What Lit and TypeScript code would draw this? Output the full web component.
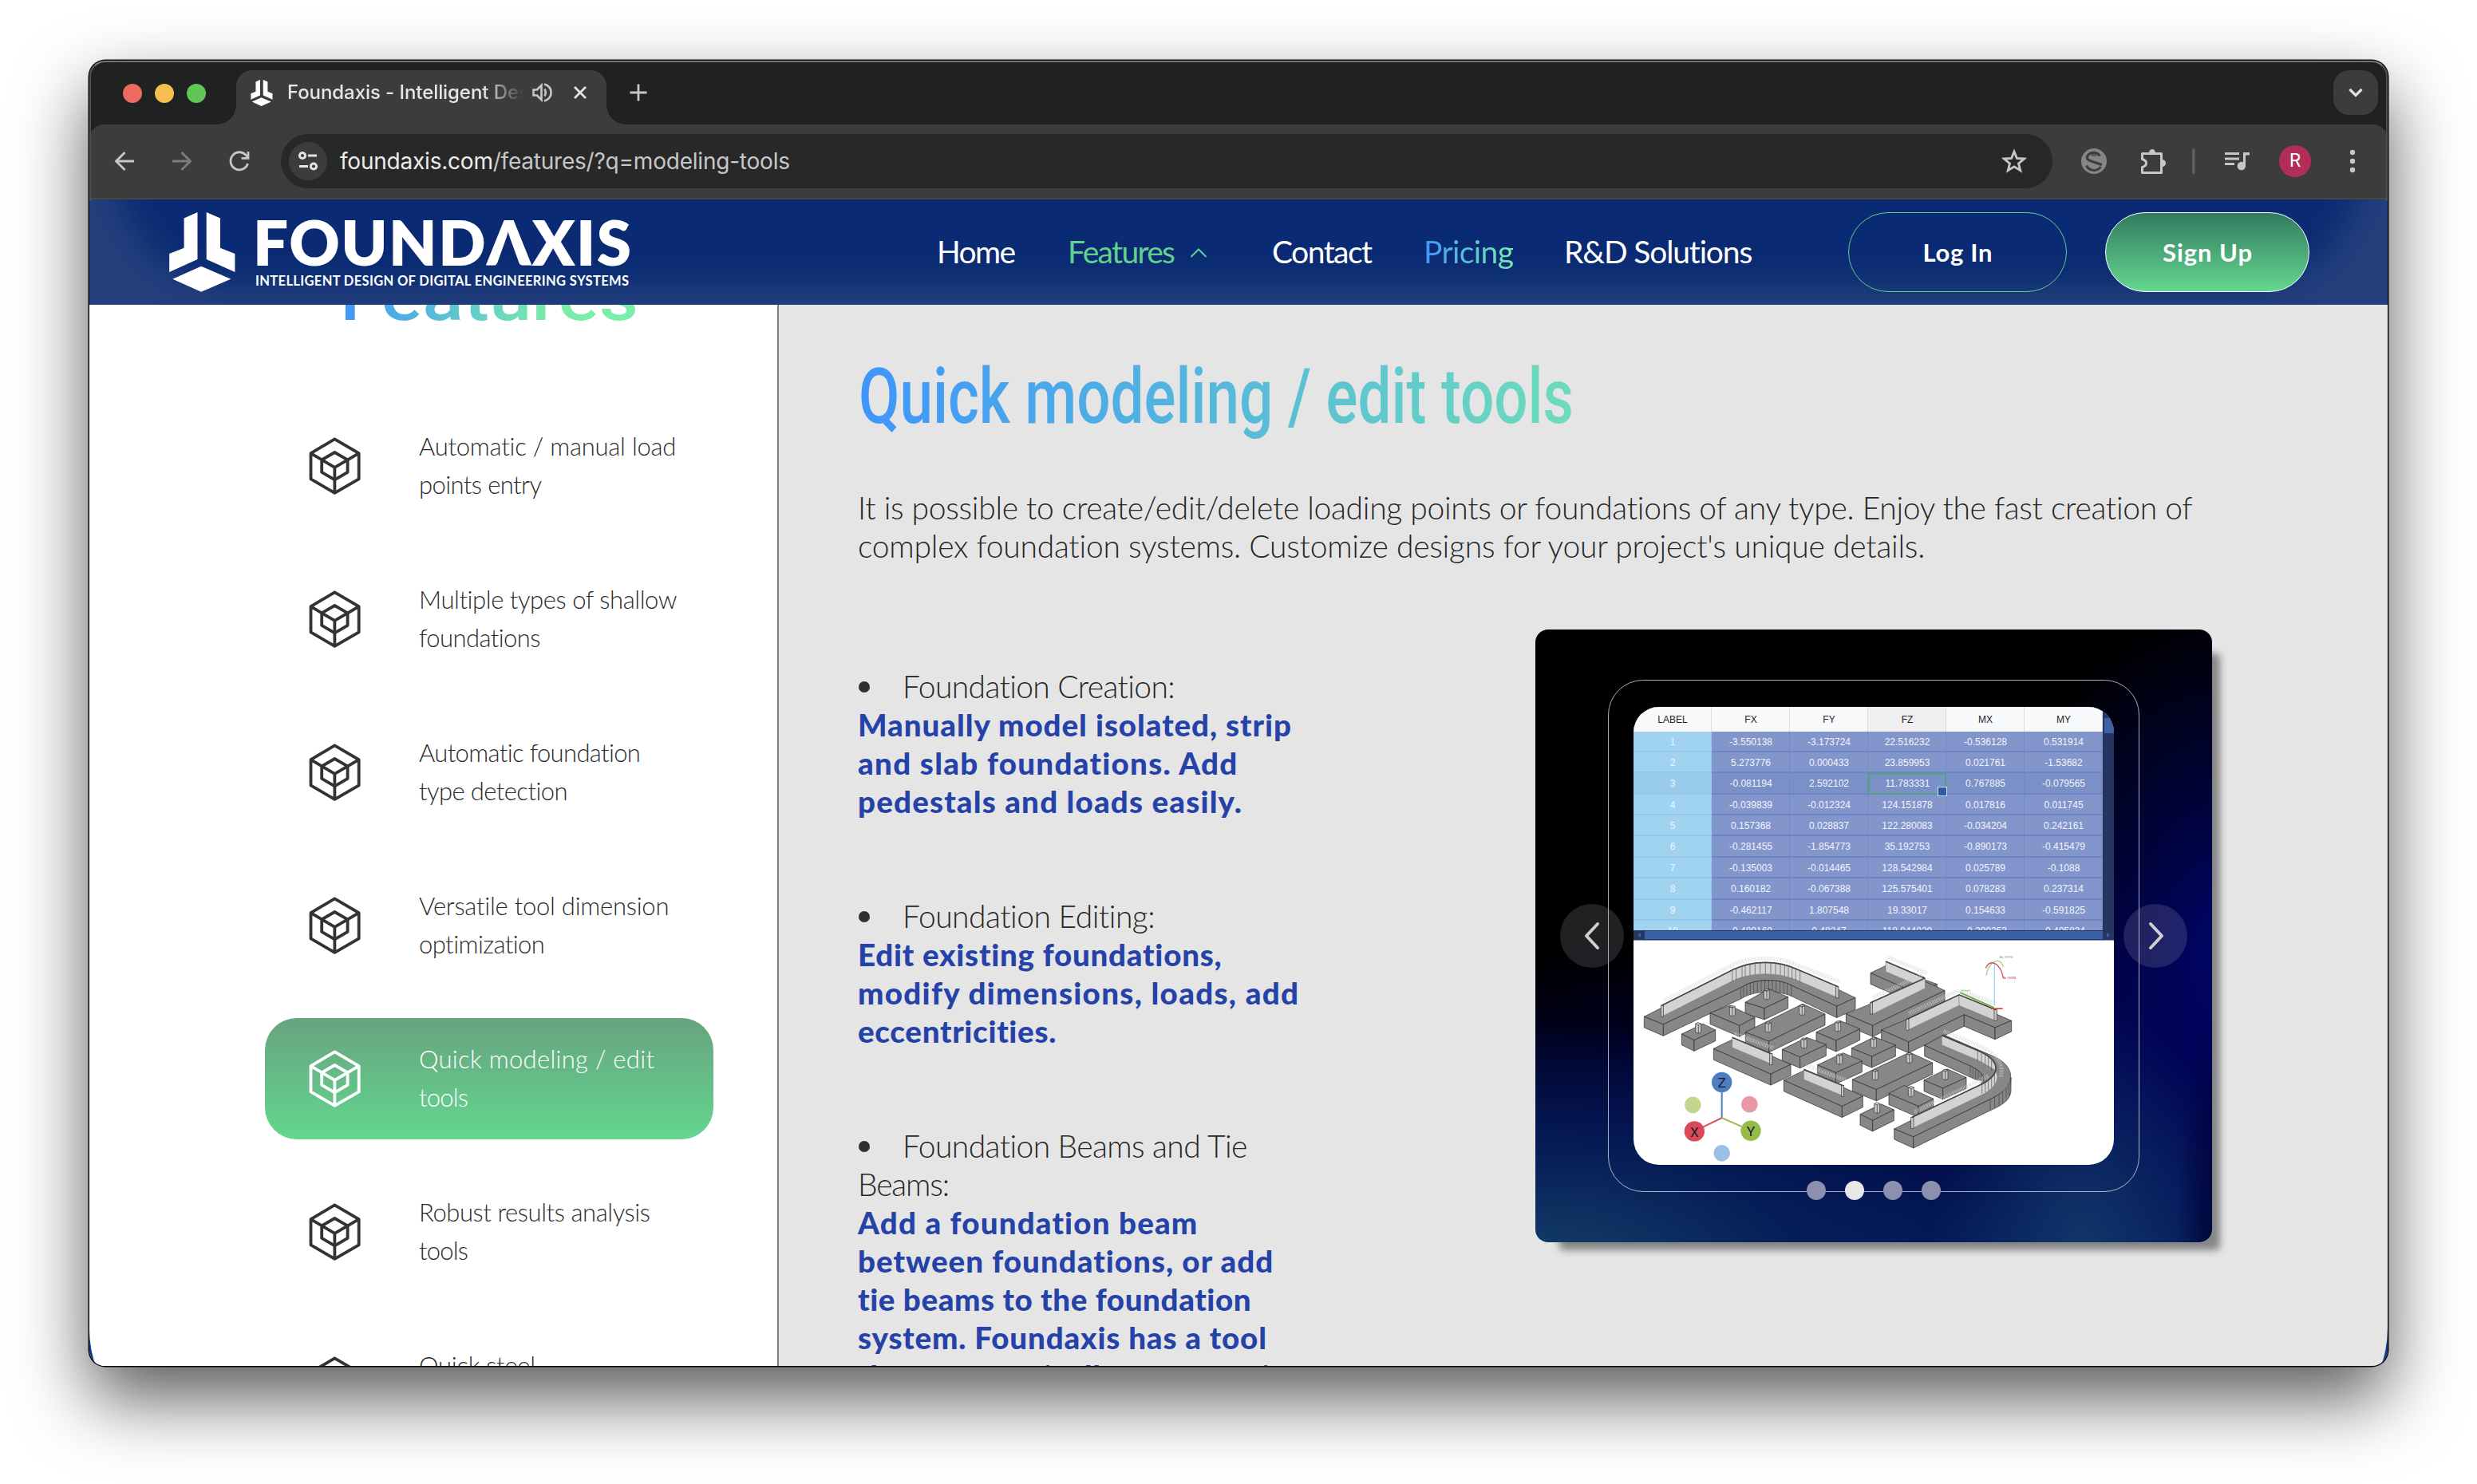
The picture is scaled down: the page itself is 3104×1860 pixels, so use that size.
import { LitElement, html, svg, css } from "lit";
import { customElement } from "lit/decorators.js";
import { classMap } from "lit/directives/class-map.js";

/** One line of text set to an exact measure; "track" spreads letters, "scale" condenses them. */
const line = (text: string, width: number, cls = "", mode = "track") =>
  html`<span class="fit ${cls}" data-w=${width} data-mode=${mode}>${text}</span>`;

const FEATURES: { lines: [string, number][]; active?: boolean }[] = [
  { lines: [["Automatic / manual load", 323], ["points entry", 154]] },
  { lines: [["Multiple types of shallow", 324], ["foundations", 153]] },
  { lines: [["Automatic foundation", 279], ["type detection", 187]] },
  { lines: [["Versatile tool dimension", 314], ["optimization", 159]] },
  { lines: [["Quick modeling / edit", 295], ["tools", 62]], active: true },
  { lines: [["Robust results analysis", 290], ["tools", 62]] },
  { lines: [["Quick steel", 146], ["design", 90]] },
];

const BULLETS: { head: [string, number][]; body: [string, number][] }[] = [
  {
    head: [["Foundation Creation:", 343]],
    body: [["Manually model isolated, strip", 543], ["and slab foundations. Add", 476], ["pedestals and loads easily.", 481]],
  },
  {
    head: [["Foundation Editing:", 318]],
    body: [["Edit existing foundations,", 457], ["modify dimensions, loads, add", 552], ["eccentricities.", 249]],
  },
  {
    head: [["Foundation Beams and Tie", 433], ["Beams:", 115]],
    body: [
      ["Add a foundation beam", 426],
      ["between foundations, or add", 521],
      ["tie beams to the foundation", 494],
      ["system. Foundaxis has a tool", 512],
      ["that automatically connects it", 532],
    ],
  },
];

const COLUMNS = ["LABEL", "FX", "FY", "FZ", "MX", "MY"];
const ROWS = [
  ["1", "-3.550138", "-3.173724", "22.516232", "-0.536128", "0.531914"],
  ["2", "5.273776", "0.000433", "23.859953", "0.021761", "-1.53682"],
  ["3", "-0.081194", "2.592102", "11.783331", "0.767885", "-0.079565"],
  ["4", "-0.039839", "-0.012324", "124.151878", "0.017816", "0.011745"],
  ["5", "0.157368", "0.028837", "122.280083", "-0.034204", "0.242161"],
  ["6", "-0.281455", "-1.854773", "35.192753", "-0.890173", "-0.415479"],
  ["7", "-0.135003", "-0.014465", "128.542984", "0.025789", "-0.1088"],
  ["8", "0.160182", "-0.067388", "125.575401", "0.078283", "0.237314"],
  ["9", "-0.462117", "1.807548", "19.33017", "0.154633", "-0.591825"],
  ["10", "-0.489169", "0.48247", "118.944029", "-0.290253", "-0.405834"],
];

type Pt = [number, number];
const pts = (p: Pt[]) => p.map((q) => q.join(",")).join(" ");
const down = (p: Pt, h: number): Pt => [p[0], p[1] + h];

/** Extruded slab: the top face is left, front, right, back. */
const slab = (l: Pt, f: Pt, r: Pt, b: Pt, h = 42) => svg`
  <polygon points=${pts([l, f, down(f, h), down(l, h)])} />
  <polygon points=${pts([f, r, down(r, h), down(f, h)])} />
  <polygon points=${pts([l, f, r, b])} />`;

const pillar = (x: number, y: number) => svg`
  <path class="pillar" d="M${x - 11},${y + 5} L${x - 2},${y} L${x + 10},${y + 4} V${y + 36} L${x},${y + 41} L${x - 11},${y + 36} Z M${x},${y + 9} V${y + 40} M${x - 11},${y + 5} L${x},${y + 9} L${x + 10},${y + 4}" />`;

const wall = (a: Pt, b: Pt, h = 40) => svg`
  <polygon class="wall" points=${pts([a, b, down(b, h), down(a, h)])} />
  <polyline class="cap" points=${pts([a, b])} />`;

const post = (x: number, y: number) =>
  svg`<rect class="pillar" x=${x - 5} y=${y} width="10" height="42" />`;

const stripes = (list: [number, number][], h = 42) =>
  list.map(([x, y]) => svg`<line class="stripe" x1=${x} y1=${y} x2=${x} y2=${y + h} />`);

/** Load ticks that run above each wall. */
const LOAD_RUNS = [
  "M140,222 L400,86 C470,56 570,56 640,88 L800,152",
  "M980,60 L1130,120",
  "M925,210 L1115,122",
  "M1060,270 L1248,182",
  "M1250,184 L1390,234",
  "M1190,336 L1325,392 C1395,424 1415,460 1405,510",
  "M1080,640 L1360,504",
  "M402,346 L550,400",
  "M672,464 L820,520",
];

const model = svg`
  <svg class="model" viewBox="24 -3 1803 841" preserveAspectRatio="none">
    <g class="solid">
      <path d="M64,282 L136,311 L430,172 C480,138 570,138 620,166 L788,243 L858,211 L650,112 C570,70 470,75 400,112 Z" />
      <path d="M136,311 L430,172 C480,138 570,138 620,166 L788,243 V286 L620,206 C570,182 480,182 430,214 L136,354 Z" />
      <polygon points="64,282 136,311 136,354 64,323" />
      <polygon points="788,243 858,211 858,254 788,286" />
      ${stripes([[428, 172], [438, 166], [450, 159], [463, 154], [476, 150], [490, 147], [504, 145], [518, 144], [532, 144], [546, 145], [560, 147], [575, 150], [589, 154], [602, 159], [617, 165]])}
      <path class="wall" d="M130,240 L400,105 C470,70 570,70 640,105 L792,170 V211 L640,146 C570,114 470,114 400,146 L130,282 Z" />
      ${stripes([[395, 108], [410, 101], [432, 93], [444, 89], [462, 85], [481, 82], [500, 80], [520, 79], [540, 79], [558, 81], [576, 84], [592, 87], [606, 91], [620, 97], [634, 103], [650, 110]])}
      <path class="cap open" d="M130,240 L400,105 C470,70 570,70 640,105 L794,170" />
      ${post(132, 240)}${post(790, 170)}

      ${slab([915, 118], [1090, 195], [1165, 160], [972, 91])}
      ${wall([972, 75], [1120, 138], 38)}
      ${slab([823, 272], [923, 315], [1194, 184], [1120, 150])}
      <polygon class="wall" points="915,230 1120,138 1120,176 923,272" />
      <polyline class="cap" points="915,230 1120,138" />
      ${post(918, 230)}

      ${slab([444, 228], [516, 250], [605, 208], [532, 178], 43)}${pillar(525, 178)}
      ${slab([312, 268], [422, 315], [480, 285], [385, 240])}${pillar(396, 240)}
      ${slab([205, 347], [252, 370], [332, 332], [285, 309], 41)}${pillar(268, 304)}
      ${slab([445, 340], [533, 374], [744, 272], [660, 234])}${pillar(658, 237)}${pillar(531, 301)}
      ${slab([711, 340], [786, 371], [875, 328], [800, 297])}${pillar(793, 298)}

      <polygon points="956,332 1058,377 1267,275 1383,323 1445,297 1248,212" />
      <polygon points="956,332 1058,377 1058,418 956,374" />
      <polygon points="1058,377 1267,275 1267,318 1058,418" />
      <polygon points="1267,275 1383,323 1383,367 1267,318" />
      <polygon points="1383,323 1445,297 1445,338 1383,367" />
      <polygon class="wall" points="1052,292 1248,200 1248,240 1052,334" />
      <polygon class="wall" points="1248,200 1385,256 1385,297 1248,240" />
      <polyline class="cap" points="1052,292 1248,200 1385,256" />
      ${post(1054, 292)}${post(1385, 256)}

      ${slab([583, 405], [650, 433], [748, 387], [675, 360])}${pillar(665, 361)}
      ${slab([844, 400], [920, 431], [1009, 389], [930, 358])}${pillar(927, 359)}
      ${slab([325, 402], [540, 497], [615, 461], [400, 366])}
      ${wall([395, 360], [543, 422], 38)}${post(541, 421)}
      ${slab([716, 463], [785, 492], [883, 448], [812, 418])}${pillar(799, 421)}
      ${slab([847, 518], [937, 555], [1148, 455], [1062, 416], 43)}${pillar(1061, 417)}${pillar(933, 480)}
      ${slab([589, 520], [808, 618], [886, 580], [667, 483])}
      ${wall([664, 480], [812, 541], 38)}${post(810, 540)}

      <path d="M1118,390 L1290,467 C1345,492 1352,520 1320,545 L1004,703 L1076,733 L1365,592 C1470,540 1460,470 1380,432 L1190,350 Z" />
      <path d="M1118,390 L1290,467 C1325,484 1342,500 1342,522 L1310,518 L1118,430 Z" />
      ${stripes([[1290, 469], [1300, 474], [1310, 480], [1320, 487], [1330, 495]], 36)}
      ${slab([1116, 520], [1187, 550], [1275, 510], [1203, 478])}${pillar(1196, 479)}
      ${slab([984, 570], [1095, 618], [1151, 590], [1042, 540])}${pillar(1068, 543)}
      <polygon points="1004,703 1076,733 1076,775 1004,742" />
      <path d="M1076,733 L1365,592 C1420,565 1443,540 1443,510 V556 C1443,590 1420,610 1365,634 L1076,775 Z" />
      ${stripes([[1365, 593], [1382, 584], [1398, 574], [1412, 563], [1425, 550], [1435, 536]])}
      <path class="wall" d="M1183,352 L1320,410 C1395,442 1412,490 1340,532 L1070,660 V702 L1335,575 C1400,540 1400,500 1380,480 L1320,446 L1183,388 Z" />
      ${stripes([[1318, 410], [1332, 417], [1346, 425], [1358, 434], [1370, 446]], 38)}
      ${stripes([[1334, 534], [1346, 528], [1358, 520], [1370, 510], [1381, 498]], 38)}
      <path class="cap open" d="M1183,352 L1320,410 C1395,442 1412,490 1340,532 L1070,660" />
      ${post(1072, 660)}
      ${slab([876, 648], [923, 671], [1003, 631], [955, 610], 41)}${pillar(940, 604)}
    </g>
    <g class="loads">${LOAD_RUNS.map((d) => svg`<path d=${d} />`)}</g>
    <g fill="none" stroke-width="4">
      <path d="M1252,192 L1380,249" stroke="#74ad3c" stroke-width="6" />
      <path d="M1381,80 V240" stroke="#9fd2f2" />
      <path d="M1350,128 C1354,84 1400,48 1414,96" stroke="#a5cc88" />
      <path d="M1348,100 C1360,66 1402,74 1414,136" stroke="#d9485a" />
      <path d="M1368,252 H1412" stroke="#e23b3b" stroke-width="5" />
      <path d="M1258,184 H1292" stroke="#9cc77e" stroke-width="5" stroke-dasharray="5 2" />
    </g>
    <text class="tiny" x="1400" y="63" fill="#8cb862">My: 1.8/718</text>
    <text class="tiny" x="1412" y="141" fill="#d9485a">Mx: 1.5/578</text>
    <g stroke-width="6">
      <path d="M356,662 V560" stroke="#4c80c4" />
      <path d="M356,662 L285,696" stroke="#d94a56" />
      <path d="M356,662 L430,694" stroke="#96bb48" />
    </g>
    <circle cx="356" cy="528" r="38" fill="#4c7dc0" /><circle cx="253" cy="712" r="38" fill="#d94a56" />
    <circle cx="465" cy="710" r="38" fill="#96bb48" /><circle cx="247" cy="613" r="31" fill="#c3d68b" />
    <circle cx="460" cy="611" r="31" fill="#e79aa6" /><circle cx="356" cy="794" r="31" fill="#9cbfe6" />
    <g class="axis">
      <text x="356" y="547">Z</text><text x="253" y="732">X</text><text x="465" y="730">Y</text>
    </g>
  </svg>`;

const mark = (cls: string) => html`<svg class=${cls} viewBox="212 266 83 100">
  <path fill="#fff" d="M247.5 266 230.6 273.5V310.7L212.2 318V341L247.5 325Z M258.7 266 276 273.5V310.7L294.4 318V341L258.7 325Z M252 333.7 289.3 349.7 252 365.8 216.3 349.7Z" />
</svg>`;

const cube = html`<svg class="cube" viewBox="386 548 65 72" fill="none" stroke="currentColor" stroke-width="3.8" stroke-linejoin="round">
  <path d="M418.4 550.3 448.7 568.2V600.4L418.4 617.8 388.5 600.4V568.2Z M388.5 568.2 418.4 585.8 448.7 568.2 M418.4 585.8V617.8 M418.4 567 434.6 576.4V591.8L418.4 601.3 402.2 591.8V576.4Z" />
</svg>`;

@customElement("app-root")
export class AppRoot extends LitElement {
  static styles = css`
    :host { display: block; width: 3104px; height: 1860px; overflow: hidden; background: #fff; }
    * { box-sizing: border-box; }
    svg { display: block; flex: none; }
    .desk { padding: 76px 112px; }
    .window {
      position: relative; width: 2880px; height: 1636px; border-radius: 20px; overflow: hidden;
      display: flex; flex-direction: column; background: #202221;
    }
    .frame {
      width: 2880px; height: 1636px; border-radius: 20px;
      box-shadow: 0 0 0 1.5px #0b0b0b, 0 40px 90px rgba(0, 0, 0, .66);
    }
    .window::after {
      content: ""; position: absolute; inset: 0; height: 174px; border-radius: 20px 20px 0 0; pointer-events: none;
      border: 2px solid #505251; border-top-color: #737574; border-bottom: 0;
    }
    .fit { display: inline-block; white-space: nowrap; transform-origin: 0 50%; }

    /* browser chrome */
    .tabs { height: 80px; flex: none; display: flex; align-items: flex-end; padding: 0 12px 0 42px; position: relative; }
    .lights { display: flex; gap: 16px; padding-bottom: 27px; width: 142px; }
    .light { width: 24px; height: 24px; border-radius: 50%; }
    .red { background: #ed6a5f; } .amber { background: #f5bf4f; } .green { background: #61c454; }
    .tab {
      position: relative; height: 68px; width: 464px; background: #3c3c3c; border-radius: 20px 20px 0 0;
      display: flex; align-items: center; padding: 0 24px 12px 16px;
    }
    .tab::before, .tab::after { content: ""; position: absolute; bottom: 0; width: 24px; height: 24px; }
    .tab::before { left: -24px; background: radial-gradient(circle at 0 0, transparent 23.5px, #3c3c3c 24px); }
    .tab::after { right: -24px; background: radial-gradient(circle at 100% 0, transparent 23.5px, #3c3c3c 24px); }
    .favicon { width: 32px; height: 33px; }
    .title {
      width: 298px; margin-left: 16px; overflow: hidden; font: 500 24px/34px Inter, sans-serif; color: #e6e6e6;
      -webkit-mask-image: linear-gradient(90deg, #000 245px, transparent 296px); mask-image: linear-gradient(90deg, #000 245px, transparent 296px);
    }
    .audio { margin-left: 9px; }
    .close { margin-left: 26px; }
    .plus { margin: 0 auto 28px 28px; }
    .drop { width: 56px; height: 56px; border-radius: 20px; background: #3c3c3c; display: grid; place-items: center; margin-bottom: 12px; }
    .bar {
      height: 94px; flex: none; background: #3c3c3c; display: flex; align-items: center; padding: 0 36px 0 31px;
      border-radius: 18px 18px 0 0; border-bottom: 2px solid #474747;
    }
    .forward { margin-left: 46px; }
    .reload { margin-left: 45px; }
    .pill { width: 2220px; height: 68px; border-radius: 34px; background: #282828; display: flex; align-items: center; padding: 0 32px 0 10px; margin-left: 38px; }
    .site { width: 48px; height: 48px; border-radius: 50%; background: #3c3c3c; display: grid; place-items: center; }
    .url { margin-left: 16px; margin-right: auto; font: 400 28px/40px Inter, sans-serif; color: #c7c7c7; }
    .url b { font-weight: 400; color: #ececec; }
    .avatar { width: 40px; height: 40px; border-radius: 50%; background: #b22d5a; color: #fff; font: 400 23px/40px Roboto, sans-serif; text-align: center; margin-left: 36px; }
    .ext { margin-left: 36px; } .puzzle { margin-left: 41px; } .sep { margin-left: 32px; }
    .media { margin-left: 37px; } .more { margin-left: 48px; }

    /* site header */
    .view { flex: 1; min-height: 0; position: relative; background: #16408a; overflow: hidden; }
    .header {
      position: relative; height: 132px; background: #233f7c; overflow: hidden; display: flex; align-items: flex-start; padding: 16px 100px;
      font-family: Lato, "Liberation Sans", sans-serif; color: #fff;
    }
    .header::before {
      content: ""; position: absolute; inset: -160px 34px 24px 34px; border-radius: 0 0 150px 150px;
      background: #0a2b73; filter: blur(19px);
    }
    .header > * { position: relative; }
    .logo { display: flex; width: 962px; flex: none; }
    .emblem { width: 83px; height: 100px; }
    .words { display: flex; flex-direction: column; margin-left: 22px; }
    .brand { font-size: 78px; font-weight: 800; line-height: 74px; height: 76px; }
    .tagline { font-size: 16.5px; font-weight: 700; line-height: 20px; padding-left: 3px; }
    .nav { display: flex; font-size: 39px; font-weight: 400; line-height: 48px; padding-top: 24.5px; width: 1142px; flex: none; }
    .nav .fit { flex: none; }
    .n2 { margin-left: 65px; color: #62d18c; }
    .up { margin: 19px 0 0 18px; }
    .n3 { margin-left: 81px; }
    .n4 { margin-left: 64px; color: transparent; background: linear-gradient(90deg, #3f95fb, #7aeea9); -webkit-background-clip: text; background-clip: text; }
    .n5 { margin-left: 63px; }
    .btn { height: 100px; border-radius: 50px; display: grid; place-items: center; font-size: 31px; font-weight: 700; line-height: 44px; flex: none; }
    .login { width: 274px; border: 1.5px solid #5fce8c; }
    .signup { width: 256px; margin-left: 48px; border: 1.5px solid #fff; background: linear-gradient(#347a60, #64d78f); }

    /* page */
    .page { height: 1430px; display: flex; border-radius: 0 0 148px 148px; overflow: hidden; background: #e5e5e5; font-family: Lato, "Liberation Sans", sans-serif; font-weight: 300; color: #2b2b2b; }
    .side { width: 864px; flex: none; background: #fff; border-right: 2px solid #808080; padding-left: 220px; }
    .side-title {
      display: block; height: 116px; margin: -68px 0 0 94px; font: 500 86px/116px Roboto, sans-serif; color: transparent;
      background: linear-gradient(90deg, #3f95fb, #7aeea9 240px); -webkit-background-clip: text; background-clip: text;
    }
    .side-head { height: 126px; overflow: visible; display: flex; align-items: flex-start; }
    .item { width: 562px; height: 152px; border-radius: 40px; margin-bottom: 40px; display: flex; align-items: center; padding-left: 55px; font-size: 31px; line-height: 48px; }
    .item.active { color: #fff; background: linear-gradient(#67a37f, #64d68f); }
    .cube { width: 65px; height: 72px; margin-right: 73px; color: #333; }
    .active .cube { color: #fff; }
    .item-lines { display: flex; flex-direction: column; align-items: flex-start; padding-bottom: 2px; }
    .content { padding: 57px 0 0 99px; flex: 1; }
    .heading {
      font: 500 96px/116px Roboto, sans-serif; color: transparent;
      background: linear-gradient(90deg, #3f95fb, #72e4b4 112%); -webkit-background-clip: text; background-clip: text;
    }
    .head-row { height: 116px; display: flex; padding-left: 1px; }
    .para { margin-top: 57px; display: flex; flex-direction: column; align-items: flex-start; font-size: 39px; line-height: 48px; color: #262626; }
    .cols { display: flex; align-items: flex-start; }
    .bullets { width: 849px; padding-top: 128px; font-size: 39px; line-height: 48px; }
    .bullet { display: flex; flex-direction: column; align-items: flex-start; margin-bottom: 96px; color: #262626; }
    .lead { display: flex; align-items: center; }
    .lead::before { content: ""; width: 14px; height: 14px; border-radius: 50%; background: #303030; margin: 1px 41px 0 1px; }
    .strong { font-weight: 900; font-size: 38.5px; color: #2542a9; }

    /* carousel card */
    .card {
      position: relative; margin-top: 81px; width: 848px; height: 768px; border-radius: 16px; display: grid; place-items: center; padding-bottom: 1px;
      box-shadow: 20px 20px 10px -10px rgba(0, 0, 0, .42);
      background:
        radial-gradient(ellipse 80px 330px at 104% 100%, rgba(0, 0, 30, .95), rgba(0, 0, 50, .6) 55%, transparent),
        radial-gradient(ellipse 190px 330px at 81% 102%, rgba(18, 54, 106, .98), transparent),
        radial-gradient(ellipse 620px 320px at 0% 106%, #16426a, rgba(6, 34, 90, .75) 55%, transparent),
        radial-gradient(ellipse 300px 430px at 102% 52%, #000566, transparent),
        linear-gradient(172deg, #000 46%, #000040 72%, #021c5a 100%);
    }
    .outline { width: 666px; height: 642px; border: 1.5px solid rgba(225, 225, 235, .75); border-radius: 44px; display: grid; place-items: center; }
    .screen { width: 602px; height: 574px; border-radius: 32px; overflow: hidden; background: #fff; display: flex; flex-direction: column; }
    .sheet { height: 280px; display: flex; overflow: hidden; background: #26355f; }
    .grid { width: 588px; display: grid; grid-template-columns: repeat(6, 1fr); grid-template-rows: 31px; grid-auto-rows: 26.4px; font: 12px/26px "Liberation Sans", Arial, sans-serif; color: #f2f5fc; text-align: center; }
    .cell { background: #8296cb; border-right: 1px solid #7389c4; border-bottom: 2px solid #6f85c3; padding-left: 1px; }
    .cell.label { background: #9fd3f0; border-color: #93c8ea; }
    .cell.hot { background: #7b90c7; }
    .cell.label.hot { background: #99cbea; }
    .cell.pick { border: 2px solid #4fa385; line-height: 22px; position: relative; }
    .cell.pick::after { content: ""; position: absolute; right: -3px; bottom: -4px; width: 10px; height: 10px; background: #2f5aa8; border: 1px solid #d4def2; }
    .th { background: #f8f9fa; color: #222; line-height: 32px; border-right: 1px solid #dcdcdc; padding-left: 1px; }
    .th.hot { background: #efeff1; }
    .vbar { flex: 1; padding-top: 14px; }
    .vbar::before { content: ""; display: block; margin-left: 2px; height: 19px; background: #3c62aa; }
    .hbar { height: 13px; background: #26355f; padding: 2px 5px 1px; border-bottom: 1px solid #8b96b5; display: flex; align-items: center; gap: 5px; }
    .track { flex: 1; height: 10px; background: #3b5fa6; }
    .model { width: 601px; height: 281px; }
    .solid polygon, .solid path { fill: #878787; stroke: #262626; stroke-width: 2; stroke-linejoin: round; }
    .solid .wall { fill: #d3d3d3; stroke: #777; stroke-width: 1.5; }
    .solid .pillar { fill: #c4c4c4; stroke: #333; stroke-width: 2; }
    .solid .cap { fill: none; stroke: #444; stroke-width: 5; }
    .stripe { stroke: #333; stroke-width: 1.6; }
    .loads { fill: none; stroke: #d2d2d2; stroke-width: 15; stroke-dasharray: 2 3 3 4; opacity: .75; }
    .tiny { font: 700 9px Roboto, sans-serif; }
    .axis { font: 400 52px Roboto, sans-serif; fill: #1b1f2a; text-anchor: middle; }
    .arrow { position: absolute; top: 344px; width: 80px; height: 80px; border-radius: 50%; background: rgba(205, 200, 220, .16); display: grid; place-items: center; }
    .prev { left: 31px; padding-right: 1px; } .next { right: 31px; padding-left: 1px; }
    .dots { position: absolute; left: 0; right: 0; top: 691px; display: flex; justify-content: center; gap: 24px; }
    .dot { width: 24px; height: 24px; border-radius: 50%; background: #8c90ad; }
    .dot.on { background: #e8e8e8; }
  `;

  /** Fits each marked line to its measure once the text is laid out. */
  protected firstUpdated() {
    this.renderRoot.querySelectorAll<HTMLElement>(".fit").forEach((el) => {
      const target = Number(el.dataset.w);
      const natural = el.getBoundingClientRect().width;
      if (el.dataset.mode === "scale") {
        el.style.transform = `scaleX(${target / natural})`;
      } else {
        const gap = (target - natural) / Math.max(1, (el.textContent ?? "").length - 1);
        el.style.letterSpacing = `${gap}px`;
        el.style.width = `${target}px`;
      }
    });
  }

  private chrome() {
    const ic = "#c7c7c7";
    return html`
      <div class="tabs">
        <div class="lights"><i class="light red"></i><i class="light amber"></i><i class="light green"></i></div>
        <div class="tab">
          ${mark("favicon")}
          <div class="title">${line("Foundaxis - Intelligent Design", 338)}</div>
          <svg class="audio" width="26" height="26" viewBox="0 0 26 26" fill="none" stroke=${ic} stroke-width="2.6">
            <path d="M2.5 9.5H7L12.5 4V22L7 16.5H2.5Z" /><path d="M16.5 8.500Q19 13 16.500 17.500" /><path d="M16 2.500C27.500 6 27.500 20 16 23.500" />
          </svg>
          <svg class="close" width="18" height="18" viewBox="0 0 18 18" stroke="#e3e3e3" stroke-width="2.8"><path d="M2 2 16 16M16 2 2 16" /></svg>
        </div>
        <svg class="plus" width="24" height="24" viewBox="0 0 24 24" stroke=${ic} stroke-width="2.8"><path d="M12 1.500V22.500M1.500 12H22.500" /></svg>
        <div class="drop"><svg width="20" height="14" viewBox="0 0 20 14" fill="none" stroke="#e3e3e3" stroke-width="3.2"><path d="M2.500 3 10 10.500 17.500 3" /></svg></div>
      </div>
      <div class="bar">
        <svg width="26" height="26" viewBox="0 0 26 26" fill="none" stroke=${ic} stroke-width="2.8"><path d="M25 13H3M13.500 2 2.500 13 13.500 24" /></svg>
        <svg class="forward" width="26" height="26" viewBox="0 0 26 26" fill="none" stroke="#7d7d7d" stroke-width="2.8"><path d="M1 13H23M12.500 2 23.500 13 12.500 24" /></svg>
        <svg class="reload" width="28" height="28" viewBox="0 0 28 28" fill="none" stroke=${ic} stroke-width="2.8"><path d="M24.500 17A11 11 0 1 1 22.500 6.800L25 10" /><path d="M25 2V10.300H16.500" /></svg>
        <div class="pill">
          <div class="site"><svg width="26" height="26" viewBox="0 0 26 26" fill="none" stroke="#e3e3e3" stroke-width="3"><circle cx="6" cy="6" r="3.600" /><path d="M13 6H24" /><circle cx="20" cy="19.500" r="3.600" /><path d="M2 19.500H13" /></svg></div>
          <div class="url"><span class="fit" data-w="564" data-mode="track"><b>foundaxis.com</b>/features/?q=modeling-tools</span></div>
          <svg width="32" height="32" viewBox="0 0 32 32" fill="none" stroke=${ic} stroke-width="2.8"><path d="M16 4 19.400 12.400 28.500 13 21.500 18.900 23.800 27.800 16 22.900 8.200 27.800 10.500 18.900 3.500 13 12.600 12.400Z" /></svg>
        </div>
        <svg class="ext" width="32" height="32" viewBox="0 0 32 32"><circle cx="16" cy="16" r="16" fill="#858585" /><path d="M23.500 9.500A9.500 9.500 0 0 0 8 9C6 12.500 8.500 14.500 12.500 16L26 20.500 M6.500 21.500A10.500 10.500 0 0 0 24.500 23" fill="none" stroke="#3c3c3c" stroke-width="3" /><path d="M11 6 16 3.500 21 6 19 10 13 10Z" fill="#3c3c3c" opacity=".6" /></svg>
        <svg class="puzzle" width="34" height="36" viewBox="0 0 34 36" fill="none" stroke=${ic} stroke-width="3"><path d="M3.500 8.500H27.500V32.500H3.500V25.500Q8.500 24 8.500 20.500T3.500 15.500Z" stroke-linejoin="round" /><path d="M12 7.500A4 4.500 0 0 1 20 7.500ZM28.500 16A4 4 0 0 1 28.500 25Z" fill=${ic} stroke="none" /></svg>
        <svg class="sep" width="4" height="32"><rect width="3.500" height="32" rx="1.700" fill="#5f5f5f" /></svg>
        <svg class="media" width="32" height="28" viewBox="0 0 32 28" fill=${ic}><path d="M0 3H18V6H0ZM0 9.500H18V12.500H0ZM0 16H12V19H0Z" /><path d="M23 3H31V6.500H26V20H23Z" /><circle cx="20.800" cy="20" r="5.200" /></svg>
        <div class="avatar">R</div>
        <svg class="more" width="8" height="30" viewBox="0 0 8 30" fill=${ic}><circle cx="4" cy="4" r="3.200" /><circle cx="4" cy="15" r="3.200" /><circle cx="4" cy="26" r="3.200" /></svg>
      </div>`;
  }

  private header() {
    return html`<header class="header">
      <div class="logo">
        ${mark("emblem")}
        <div class="words">
          <div class="brand">${line("FOUNDΛXIS", 474)}</div>
          <div class="tagline">${line("INTELLIGENT DESIGN OF DIGITAL ENGINEERING SYSTEMS", 468)}</div>
        </div>
      </div>
      <nav class="nav">
        ${line("Home", 99)}${line("Features", 135, "n2")}
        <svg class="up" width="22" height="14" viewBox="0 0 22 14" fill="none" stroke="#62d18c" stroke-width="2"><path d="M1.500 12 11 2.500 20.500 12" /></svg>
        ${line("Contact", 126, "n3")}${line("Pricing", 113, "n4")}${line("R&D Solutions", 237, "n5")}
      </nav>
      <div class="btn login">${line("Log In", 87)}</div>
      <div class="btn signup">${line("Sign Up", 112)}</div>
    </header>`;
  }

  private card() {
    return html`<div class="card">
      <div class="outline">
        <div class="screen">
          <div class="sheet">
            <div class="grid">
              ${COLUMNS.map((c) => html`<div class=${classMap({ th: true, hot: c === "FZ" })}>${c}</div>`)}
              ${ROWS.map((row, r) =>
                row.map((v, c) => html`<div class=${classMap({ cell: true, label: c === 0, hot: r === 2, pick: r === 2 && c === 3 })}>${v}</div>`),
              )}
            </div>
            <div class="vbar"></div>
          </div>
          <div class="hbar">
            <svg width="4" height="6" viewBox="0 0 4 6"><path d="M4 0V6L0 3Z" fill="#3c62aa" /></svg>
            <div class="track"></div>
            <svg width="4" height="6" viewBox="0 0 4 6"><path d="M0 0V6L4 3Z" fill="#3c62aa" /></svg>
          </div>
          ${model}
        </div>
      </div>
      <div class="arrow prev"><svg width="20" height="36" viewBox="0 0 20 36" fill="none" stroke="#d0d0d0" stroke-width="4" stroke-linecap="round" stroke-linejoin="round"><path d="M17 3 3 18 17 33" /></svg></div>
      <div class="arrow next"><svg width="20" height="36" viewBox="0 0 20 36" fill="none" stroke="#d0d0d0" stroke-width="4" stroke-linecap="round" stroke-linejoin="round"><path d="M3 3 17 18 3 33" /></svg></div>
      <div class="dots">${[0, 1, 2, 3].map((i) => html`<i class=${classMap({ dot: true, on: i === 1 })}></i>`)}</div>
    </div>`;
  }

  render() {
    return html`<div class="desk"><div class="frame"><div class="window">
      ${this.chrome()}
      <div class="view">
        ${this.header()}
        <div class="page">
          <aside class="side">
            <div class="side-head">${line("Features", 374, "side-title", "scale")}</div>
            ${FEATURES.map((f) => html`<div class=${classMap({ item: true, active: !!f.active })}>
              ${cube}
              <div class="item-lines">${f.lines.map(([t, w]) => line(t, w))}</div>
            </div>`)}
          </aside>
          <main class="content">
            <div class="head-row">${line("Quick modeling / edit tools", 896, "heading", "scale")}</div>
            <div class="para">
              ${line("It is possible to create/edit/delete loading points or foundations of any type. Enjoy the fast creation of", 1674)}
              ${line("complex foundation systems. Customize designs for your project's unique details.", 1338)}
            </div>
            <div class="cols">
              <div class="bullets">
                ${BULLETS.map((b) => html`<div class="bullet">
                  ${b.head.map(([t, w], i) => (i === 0 ? html`<div class="lead">${line(t, w)}</div>` : line(t, w)))}
                  ${b.body.map(([t, w]) => line(t, w, "strong"))}
                </div>`)}
              </div>
              ${this.card()}
            </div>
          </main>
        </div>
      </div>
    </div></div></div>`;
  }
}
